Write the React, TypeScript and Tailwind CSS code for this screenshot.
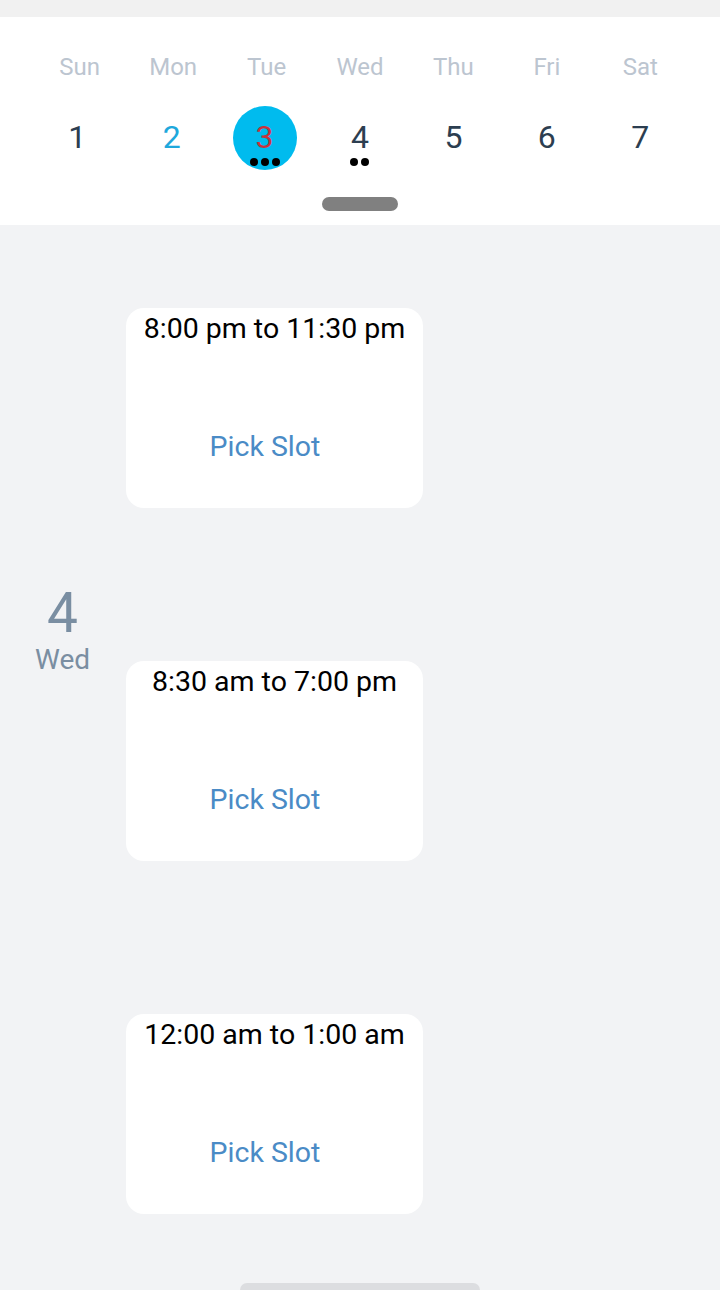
import React from "react";

const days = ["Sun", "Mon", "Tue", "Wed", "Thu", "Fri", "Sat"];
const nums = [1, 2, 3, 4, 5, 6, 7];

function Dots({ n }: { n: number }) {
  return (
    <div className="flex gap-[3px] justify-center h-[8px]">
      {Array.from({ length: n }).map((_, i) => (
        <span key={i} className="block w-[8px] h-[8px] rounded-full bg-black" />
      ))}
    </div>
  );
}

function Card({ time }: { time: string }) {
  return (
    <div className="w-[297px] h-[200px] bg-white rounded-[18px] flex flex-col items-center">
      <div className="mt-[5px] text-[28.5px] leading-[32px] text-black">{time}</div>
      <div className="mt-[86px] pr-[19px] text-[28.5px] leading-[32px] text-[#4a8bc6]">Pick Slot</div>
    </div>
  );
}

export default function App() {
  return (
    <div className="w-[720px] h-[1290px] bg-[#f2f3f5] overflow-hidden flex flex-col" style={{ fontFamily: "Roboto, 'Noto Sans', sans-serif" }}>
      <div className="h-[17px] bg-[#f1f1f1]" />
      <div className="bg-white h-[208px] flex flex-col items-center">
        <div className="w-full px-[33px] grid grid-cols-7 mt-[35px]">
          {days.map((d) => (
            <div key={d} className="text-center text-[24px] leading-[30px] text-[#bcc5d0]">{d}</div>
          ))}
        </div>
        <div className="w-full px-[33px] grid grid-cols-7 mt-[24px]">
          {nums.map((n) => {
            if (n === 3) {
              return (
                <div key={n} className="flex justify-center">
                  <div className="w-[64px] h-[64px] -ml-[4px] rounded-full bg-[#00bbee] flex flex-col items-center">
                    <div className="text-[32px] leading-[40px] mt-[11px] text-[#c8323b]">3</div>
                    <div className="mt-[1px]"><Dots n={3} /></div>
                  </div>
                </div>
              );
            }
            const color = n === 2 ? "text-[#1ea8dc]" : "text-[#2c3e50]";
            const shift = n === 1 ? "-ml-[5px]" : n === 2 ? "-ml-[3px]" : "";
            return (
              <div key={n} className="flex flex-col items-center">
                <div className={`text-[32px] leading-[40px] mt-[11px] ${color} ${shift}`}>{n}</div>
                {n === 4 && <div className="mt-[1px]"><Dots n={2} /></div>}
              </div>
            );
          })}
        </div>
        <div className="w-[76px] h-[14px] rounded-full bg-[#808080] mt-auto mb-[14px]" />
      </div>
      <div className="flex flex-col pt-[83px] gap-[153px]">
        <div className="flex items-start">
          <div className="w-[126px]" />
          <Card time="8:00 pm to 11:30 pm" />
        </div>
        <div className="flex items-start">
          <div className="w-[126px] flex flex-col items-center -mt-[76px]">
            <div className="text-[55px] leading-[56px] text-[#7a8ea2] -ml-[1px]">4</div>
            <div className="text-[28px] leading-[32px] text-[#7a8ea2] mt-[3px] -ml-[1px]">Wed</div>
          </div>
          <Card time="8:30 am to 7:00 pm" />
        </div>
        <div className="flex items-start">
          <div className="w-[126px]" />
          <Card time="12:00 am to 1:00 am" />
        </div>
      </div>
      <div className="mt-auto flex justify-center">
        <div className="w-[240px] h-[7px] rounded-t-full bg-[#dcdde0]" />
      </div>
    </div>
  );
}
